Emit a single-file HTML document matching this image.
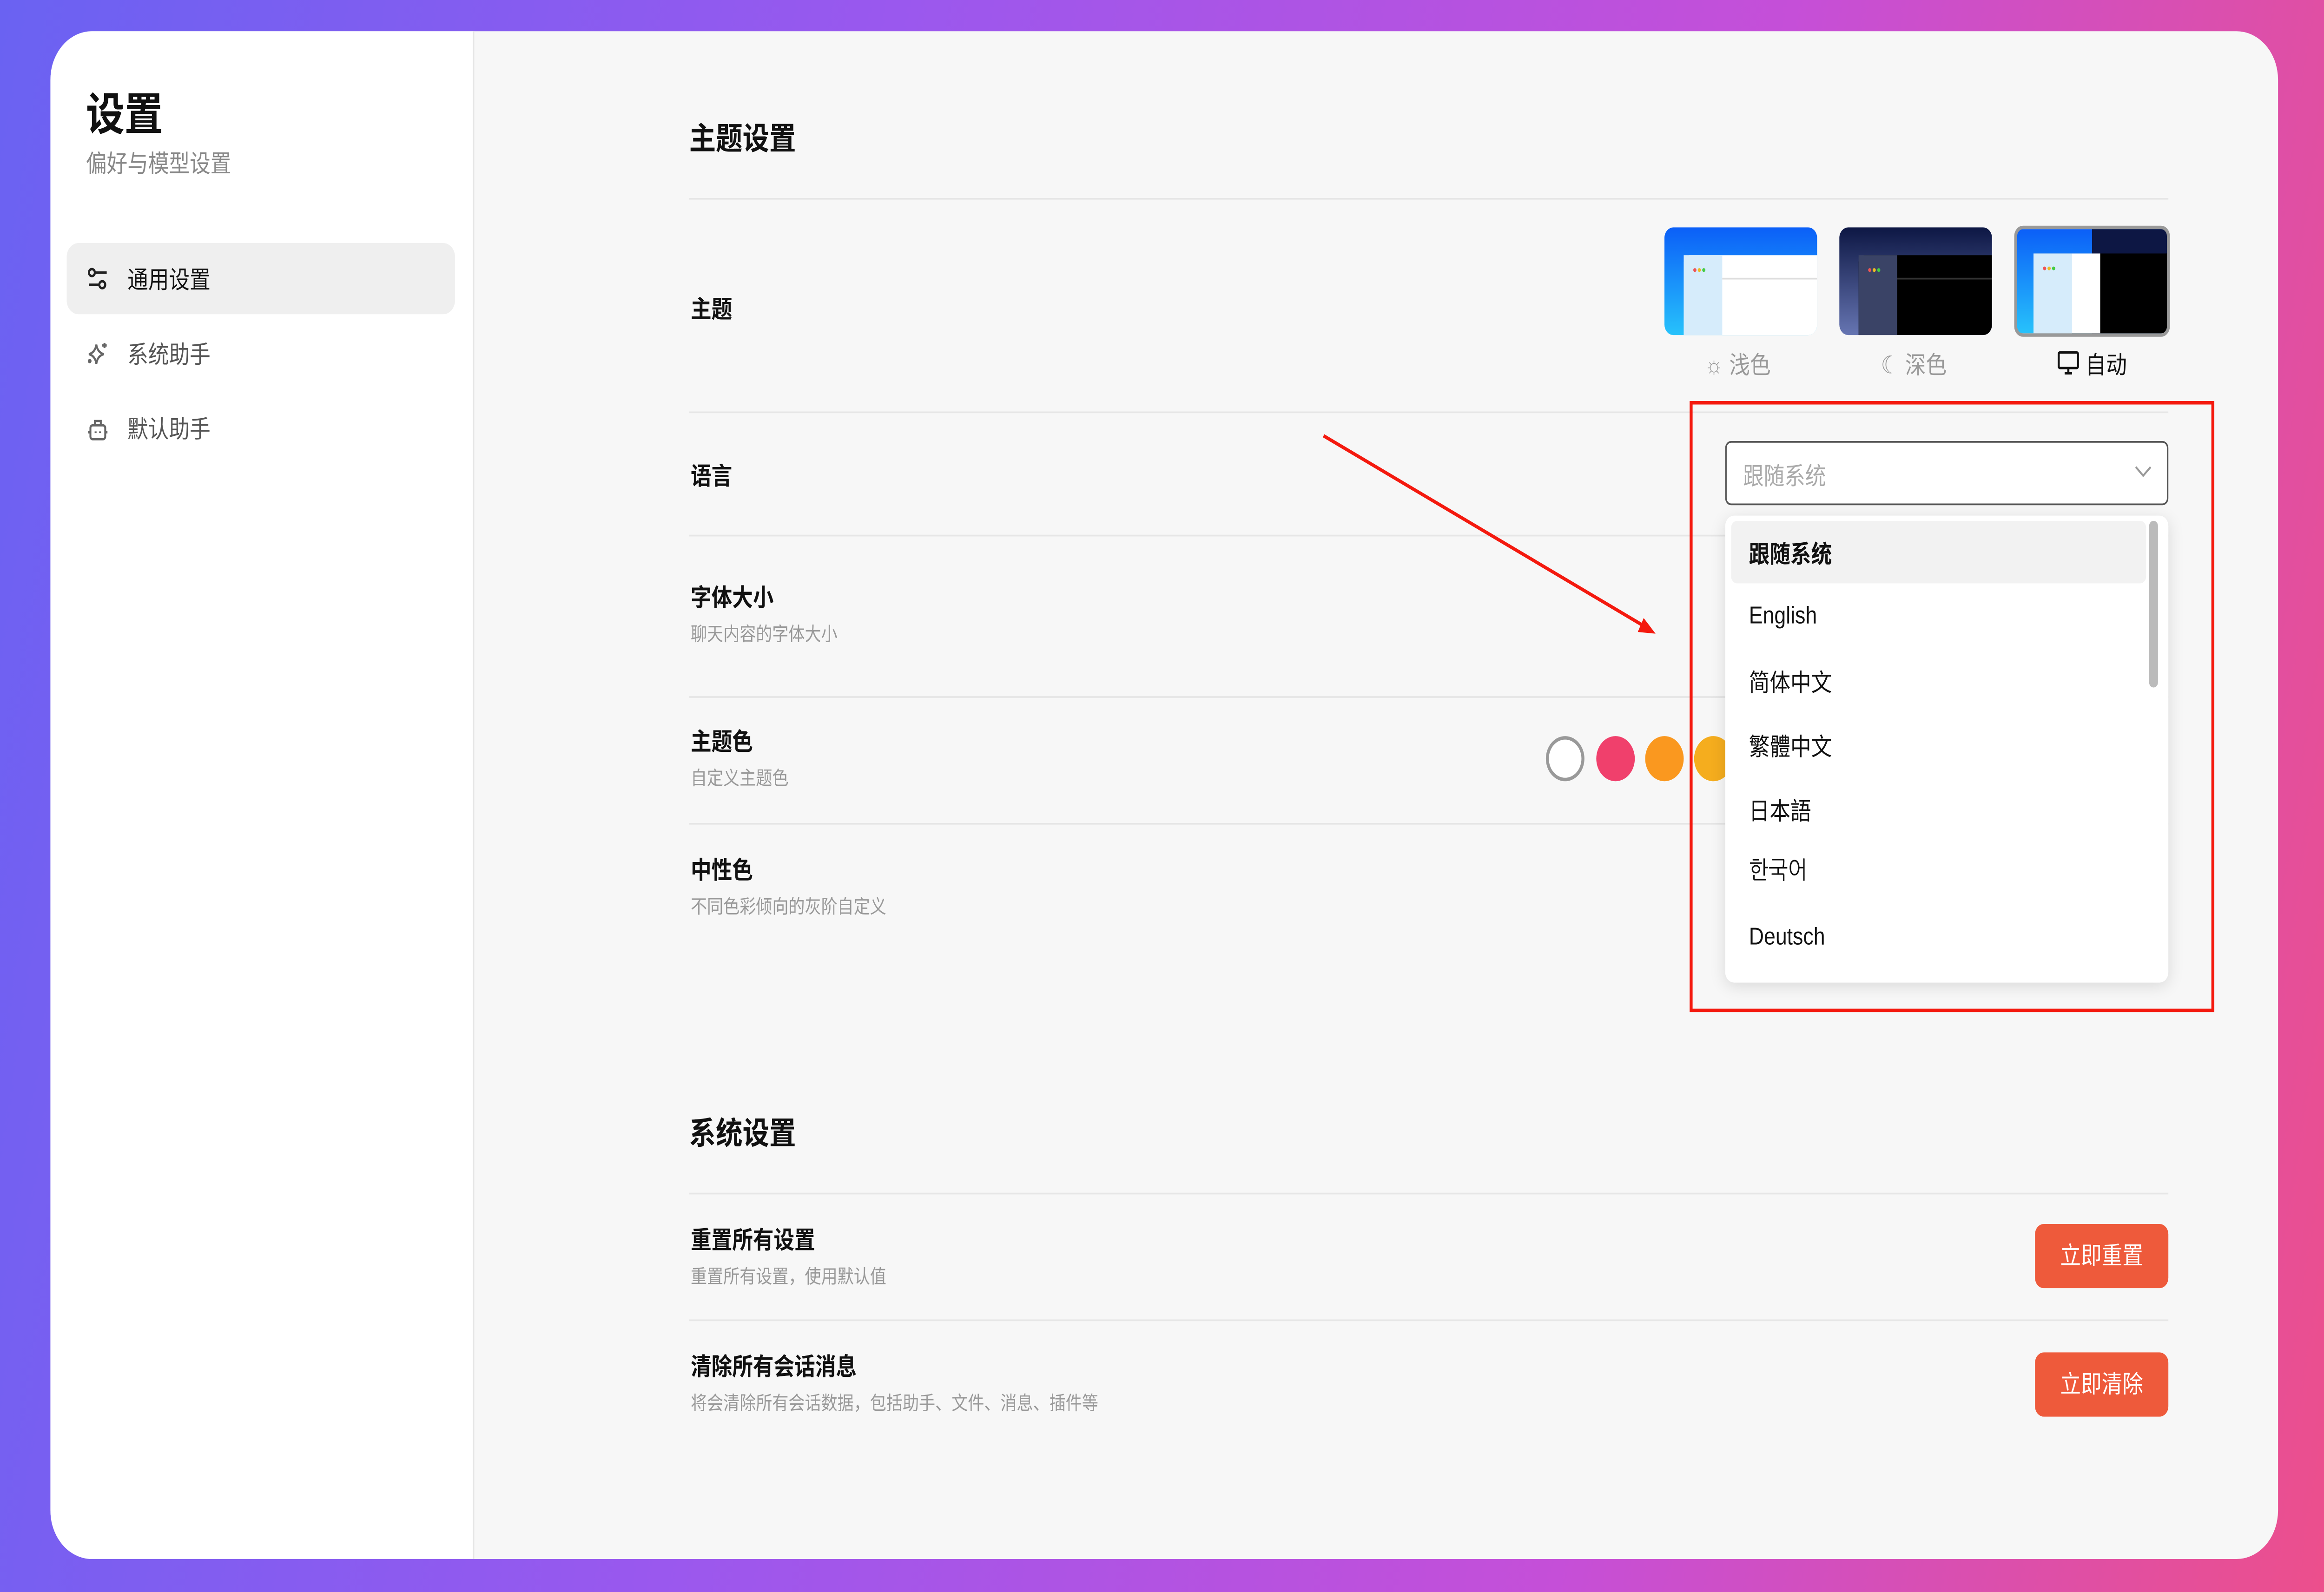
<!DOCTYPE html>
<html><head><meta charset="utf-8">
<style>
*{margin:0;padding:0;box-sizing:border-box}
html,body{width:100vw;height:100vh;overflow:hidden;background:#c54fd8}
body{font-family:"Liberation Sans","Noto Sans CJK SC",sans-serif;color:#111}
#s{position:absolute;left:0;top:0;width:1568px;height:917px;transform:scale(3.736);transform-origin:0 0;
background:linear-gradient(100deg,#6a62f2 0%,#9a58ee 35%,#c54fd8 70%,#ec4f8c 100%)}
.a{position:absolute;white-space:nowrap}
.card{left:34px;top:18px;width:1503px;height:880px;border-radius:28px;background:#f7f7f7;overflow:hidden}
.side{left:0;top:0;width:286px;height:880px;background:#fff;border-right:1px solid #e6e6e6}
.lbl{font-size:14px;font-weight:bold;color:#111}
.sub{font-size:11px;color:#999}
.line{height:1px;background:#e6e6e6;left:465px;width:998px}
.h{font-size:18px;font-weight:bold}
.th{width:103px;height:62px;border-radius:6px;overflow:hidden}
.btn{width:90px;height:37px;border-radius:6px;background:#ee5a3b;color:#fff;font-size:14px;text-align:center;line-height:37px}
.dot{width:26px;height:26px;border-radius:50%}
.it{left:16px;font-size:14px;color:#111}
</style></head><body>
<div id="s">
<div class="a card">
 <div class="a side">
  <div class="a" style="left:24px;top:28px;font-size:26px;font-weight:bold">设置</div>
  <div class="a" style="left:24px;top:66px;font-size:14px;color:#888">偏好与模型设置</div>
  <div class="a" style="left:11px;top:122px;width:262px;height:41px;background:#efefef;border-radius:8px"></div>
  <svg class="a" style="left:24px;top:135px" width="16" height="16" viewBox="0 0 16 16" fill="none" stroke="#222" stroke-width="1.4"><circle cx="4" cy="4" r="2"/><path d="M6 4h8M2 11h7"/><circle cx="11" cy="11" r="2"/></svg>
  <div class="a" style="left:52px;top:133px;font-size:14px">通用设置</div>
  <svg class="a" style="left:24px;top:178px" width="16" height="16" viewBox="0 0 16 16" fill="none" stroke="#666" stroke-width="1.3"><path d="M7 2.5Q7.8 7 12 8Q7.8 9 7 13.5Q6.2 9 2 8Q6.2 7 7 2.5Z"/><path d="M12.5 1.5v3M11 3h3"/><circle cx="2.5" cy="12" r=".6" fill="#666"/></svg>
  <div class="a" style="left:52px;top:176px;font-size:14px;color:#555">系统助手</div>
  <svg class="a" style="left:24px;top:221px" width="16" height="16" viewBox="0 0 16 16" fill="none" stroke="#666" stroke-width="1.3"><rect x="3" y="6" width="10" height="8" rx="1.5"/><path d="M6 6V3.5h4V6M1.5 10h1.5M13 10h1.5M6.5 9.5v1M9.5 9.5v1"/></svg>
  <div class="a" style="left:52px;top:219px;font-size:14px;color:#555">默认助手</div>
 </div>
</div>
<div class="a h" style="left:465px;top:66px">主题设置</div>
<div class="a line" style="top:114px"></div>
<div class="a lbl" style="left:466px;top:168px">主题</div>
<div class="a th" style="left:1123px;top:131px;background:linear-gradient(#0b5ff8,#27c2fb)"><div class="a" style="left:13px;top:16px;width:90px;height:46px;background:#fff;border-radius:4px 0 0 0"></div><div class="a" style="left:13px;top:16px;width:26px;height:46px;background:#d6ecfb"></div><div class="a" style="left:39px;top:29px;width:64px;height:1px;background:#ddd"></div><div class="a" style="left:19px;top:22px;font-size:5px;color:#e55">●<span style="color:#eb2">●</span><span style="color:#4c4">●</span></div></div>
<div class="a th" style="left:1241px;top:131px;background:linear-gradient(#0d1744,#6675b2)"><div class="a" style="left:13px;top:16px;width:90px;height:46px;background:#000;border-radius:4px 0 0 0"></div><div class="a" style="left:13px;top:16px;width:26px;height:46px;background:#3a4366"></div><div class="a" style="left:39px;top:29px;width:64px;height:1px;background:#333"></div><div class="a" style="left:19px;top:22px;font-size:5px;color:#e55">●<span style="color:#eb2">●</span><span style="color:#4c4">●</span></div></div>
<div class="a th" style="left:1359px;top:130px;width:105px;height:64px;border:2px solid #999;background:linear-gradient(90deg,transparent 50%,#0d1744 50%),linear-gradient(#0b5ff8,#27c2fb)"><div class="a" style="left:11px;top:14px;width:92px;height:46px;background:#000"></div><div class="a" style="left:11px;top:14px;width:45px;height:46px;background:#fff"></div><div class="a" style="left:11px;top:14px;width:26px;height:46px;background:#d6ecfb"></div><div class="a" style="left:17px;top:20px;font-size:5px;color:#e55">●<span style="color:#eb2">●</span><span style="color:#4c4">●</span></div></div>
<div class="a" style="left:1150px;top:200px;font-size:14px;color:#999">☼ 浅色</div>
<div class="a" style="left:1269px;top:200px;font-size:14px;color:#999">☾ 深色</div>
<svg class="a" style="left:1388px;top:202px" width="15" height="14" viewBox="0 0 15 14" fill="none" stroke="#111" stroke-width="1.4"><rect x="1" y="1" width="13" height="9" rx="1"/><path d="M7.5 10v3M5 13h5"/></svg>
<div class="a" style="left:1407px;top:200px;font-size:14px;color:#111">自动</div>
<div class="a line" style="top:237px"></div>
<div class="a lbl" style="left:466px;top:264px">语言</div>
<div class="a line" style="top:308px"></div>
<div class="a lbl" style="left:466px;top:334px">字体大小</div>
<div class="a sub" style="left:466px;top:357px">聊天内容的字体大小</div>
<div class="a line" style="top:401px"></div>
<div class="a lbl" style="left:466px;top:417px">主题色</div>
<div class="a sub" style="left:466px;top:440px">自定义主题色</div>
<div class="a dot" style="left:1043px;top:424px;background:#fff;border:2px solid #999"></div>
<div class="a dot" style="left:1077px;top:424px;background:#f0406c"></div>
<div class="a dot" style="left:1110px;top:424px;background:#fa981f"></div>
<div class="a dot" style="left:1143px;top:424px;background:#f5ad1e"></div>
<div class="a line" style="top:474px"></div>
<div class="a lbl" style="left:466px;top:491px">中性色</div>
<div class="a sub" style="left:466px;top:514px">不同色彩倾向的灰阶自定义</div>
<div class="a h" style="left:465px;top:639px">系统设置</div>
<div class="a line" style="top:687px"></div>
<div class="a lbl" style="left:466px;top:704px">重置所有设置</div>
<div class="a sub" style="left:466px;top:727px">重置所有设置，使用默认值</div>
<div class="a btn" style="left:1373px;top:705px">立即重置</div>
<div class="a line" style="top:760px"></div>
<div class="a lbl" style="left:466px;top:777px">清除所有会话消息</div>
<div class="a sub" style="left:466px;top:800px">将会清除所有会话数据，包括助手、文件、消息、插件等</div>
<div class="a btn" style="left:1373px;top:779px">立即清除</div>
<div class="a" style="left:1164px;top:254px;width:299px;height:37px;border:1px solid #555;border-radius:4px;background:#fff"><div class="a" style="left:11px;top:9px;font-size:14px;color:#aaa">跟随系统</div><svg class="a" style="left:275px;top:13px" width="12" height="8" viewBox="0 0 12 8" fill="none" stroke="#999" stroke-width="1.2"><path d="M1 1l5 5 5-5"/></svg></div>
<div class="a" style="left:1164px;top:297px;width:299px;height:269px;background:#fff;border-radius:6px;box-shadow:0 2px 10px rgba(0,0,0,.12)">
 <div class="a" style="left:4px;top:3px;width:280px;height:36px;background:#f2f2f2;border-radius:4px"></div>
 <div class="a" style="left:286px;top:3px;width:6px;height:96px;background:#bbb;border-radius:3px"></div>
 <div class="a it" style="top:12px;font-weight:bold">跟随系统</div>
 <div class="a it" style="top:49px">English</div>
 <div class="a it" style="top:86px">简体中文</div>
 <div class="a it" style="top:123px">繁體中文</div>
 <div class="a it" style="top:160px">日本語</div>
 <div class="a it" style="top:196px;font-family:'Liberation Sans','NanumGothic','Noto Sans CJK KR',sans-serif">한국어</div>
 <div class="a it" style="top:234px">Deutsch</div>
</div>
<div class="a" style="left:1140px;top:231px;width:354px;height:352px;border:2px solid #f4190e"></div>
<svg class="a" style="left:0;top:0" width="1568" height="917"><line x1="893" y1="251" x2="1110" y2="361" stroke="#f4190e" stroke-width="2"/><path d="M1117 365l-12-1 4-8z" fill="#f4190e"/></svg>
</div>
<script>
(function(){var w=document.documentElement.clientWidth||window.innerWidth,h=document.documentElement.clientHeight||window.innerHeight;
var el=document.getElementById('s');el.style.transform='scale('+(w/1568)+','+(h/917)+')';})();
</script>
</body></html>
